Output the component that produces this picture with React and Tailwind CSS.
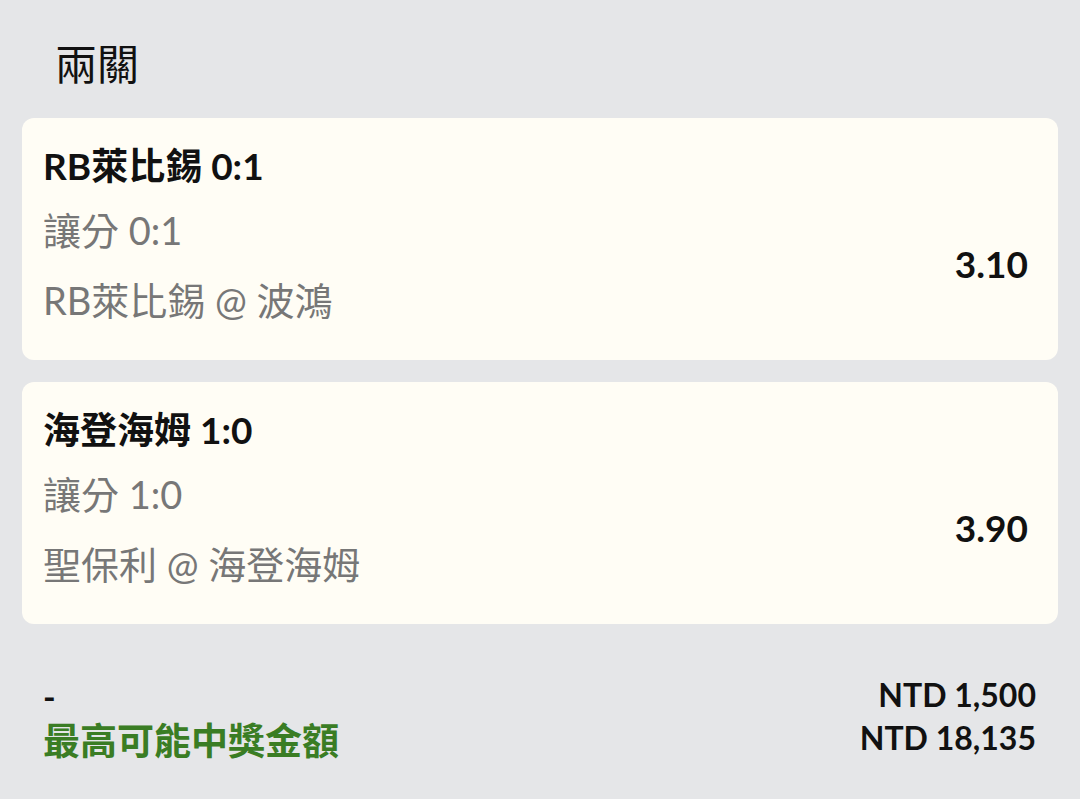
import React from "react";

const font = { fontFamily: '"Lato", "Noto Sans CJK TC", sans-serif' };

const legs = [
  { title: "RB萊比錫 0:1", market: "讓分 0:1", match: "RB萊比錫 @ 波鴻", odds: "3.10" },
  { title: "海登海姆 1:0", market: "讓分 1:0", match: "聖保利 @ 海登海姆", odds: "3.90" },
];

function LegCard({ leg }) {
  return (
    <div className="flex items-center justify-between rounded-[12px] bg-[#fffdf5] pl-[21px] pr-[30px] pt-[15px] pb-[23px]">
      <div className="flex flex-col">
        <div className="text-[37px] leading-[65px] font-bold text-[#111]">{leg.title}</div>
        <div className="text-[38px] leading-[65px] text-[#777]">{leg.market}</div>
        <div className="text-[38px] leading-[74px] text-[#777]">{leg.match}</div>
      </div>
      <div className="mt-[58px] text-[37px] font-bold text-[#111]">{leg.odds}</div>
    </div>
  );
}

export default function App() {
  return (
    <div className="min-h-[799px] w-[1080px] bg-[#e5e6e8]" style={font}>
      <div className="pl-[55px] pt-[40px] pb-[30px] text-[42px] leading-[48px] text-[#111]">兩關</div>

      <div className="flex flex-col gap-[22px] px-[22px]">
        {legs.map((leg) => (
          <LegCard key={leg.title} leg={leg} />
        ))}
      </div>

      {/* Totals */}
      <div className="mt-[51px] flex justify-between pl-[43px] pr-[44px]">
        <div className="flex flex-col">
          <div className="text-[34px] leading-[44px] font-bold text-[#111]">-</div>
          <div className="text-[37px] leading-[44px] font-bold text-[#3a7d24]">最高可能中獎金額</div>
        </div>
        <div className="-mt-[2px] flex flex-col items-end">
          <div className="text-[32px] leading-[43px] font-bold text-[#111]">NTD 1,500</div>
          <div className="text-[32px] leading-[43px] font-bold text-[#111]">NTD 18,135</div>
        </div>
      </div>
    </div>
  );
}
